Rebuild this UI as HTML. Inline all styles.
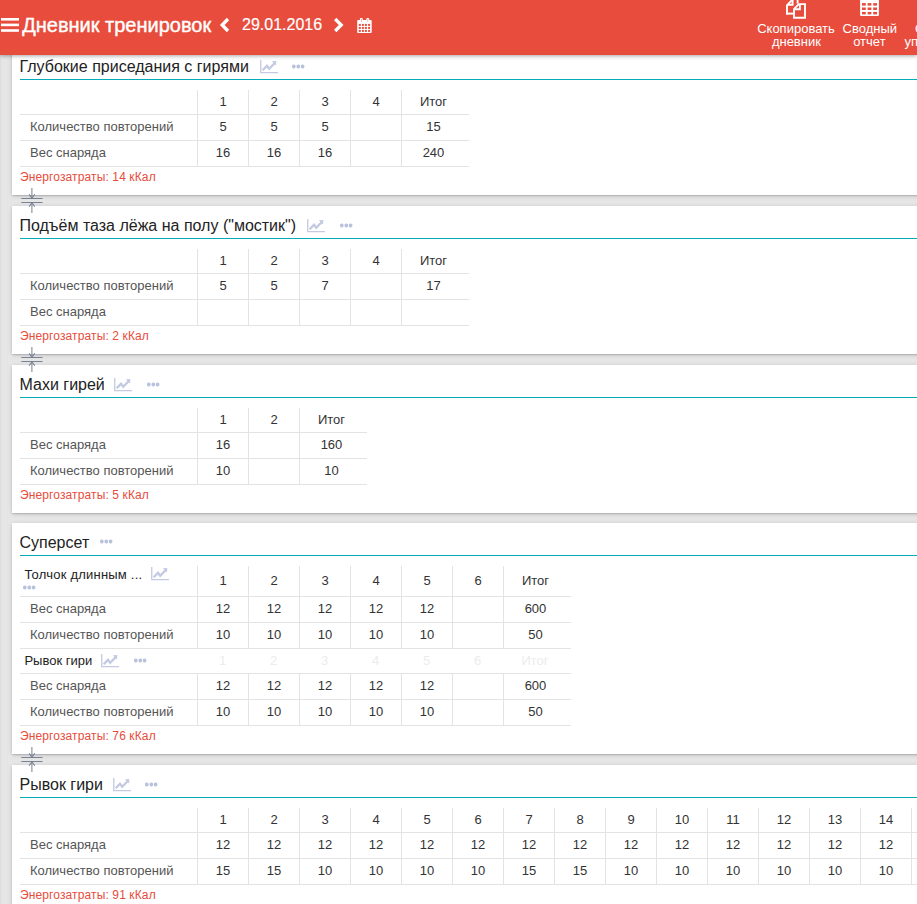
<!DOCTYPE html><html><head><meta charset="utf-8"><style>
*{margin:0;padding:0;box-sizing:border-box}
html,body{width:917px;height:904px;overflow:hidden}
body{background:linear-gradient(to right,#dcdcdc 0,#e2e2e2 1px,#e6e6e6 2.5px) #e6e6e6;font-family:"Liberation Sans", sans-serif;position:relative}
.t{position:absolute;white-space:nowrap}
.i{position:absolute;display:block}
.hdr{position:absolute;left:0;top:0;width:917px;height:55px;background:#e74c3c;z-index:10;box-shadow:0 1px 4px rgba(0,0,0,.35)}
.card{position:absolute;left:12px;width:940px;background:#fff;box-shadow:0 1px 5px -1px rgba(0,0,0,.27),0 1px 1px rgba(0,0,0,.1)}
.tl{position:absolute;left:8px;height:1px;width:940px;background:#02acb9}
.row{position:absolute;box-sizing:content-box}
.c0{position:absolute;left:0;top:0}
.cn{position:absolute;top:0;text-align:center;font-size:13px}
.lbl{position:absolute;left:10px;font-size:13px;color:#555;white-space:nowrap}
</style></head><body><div class="hdr"><svg class="i" style="left:0;top:0" width="917" height="54" viewBox="0 0 917 54"><rect x="1" y="18" width="18" height="2.6" fill="#ffffff"/><rect x="1" y="23.6" width="18" height="2.6" fill="#ffffff"/><rect x="1" y="29.2" width="18" height="2.6" fill="#ffffff"/><path d="M228 19 L222.2 25 L228 31" fill="none" stroke="#ffffff" stroke-width="3.3"/><path d="M335.2 19 L341.2 25 L335.2 31" fill="none" stroke="#ffffff" stroke-width="3.3"/><rect x="357.2" y="20" width="14.5" height="13" rx="1" fill="#ffffff"/><rect x="359.9" y="18" width="2.9" height="4" rx="1" fill="#ffffff"/><rect x="366.3" y="18" width="2.9" height="4" rx="1" fill="#ffffff"/><rect x="361" y="19" width="0.8" height="2.8" fill="#f2a69e"/><rect x="367.4" y="19" width="0.8" height="2.8" fill="#f2a69e"/><rect x="358.8" y="23.9" width="2" height="2" fill="#e74c3c"/><rect x="358.8" y="26.9" width="2" height="2" fill="#e74c3c"/><rect x="358.8" y="29.9" width="2" height="2" fill="#e74c3c"/><rect x="361.9" y="23.9" width="2" height="2" fill="#e74c3c"/><rect x="361.9" y="26.9" width="2" height="2" fill="#e74c3c"/><rect x="361.9" y="29.9" width="2" height="2" fill="#e74c3c"/><rect x="364.9" y="23.9" width="2" height="2" fill="#e74c3c"/><rect x="364.9" y="26.9" width="2" height="2" fill="#e74c3c"/><rect x="364.9" y="29.9" width="2" height="2" fill="#e74c3c"/><rect x="368.1" y="23.9" width="2" height="2" fill="#e74c3c"/><rect x="368.1" y="26.9" width="2" height="2" fill="#e74c3c"/><rect x="368.1" y="29.9" width="2" height="2" fill="#e74c3c"/><path d="M787 14.6 V5.3 L791.8 0.2 V-2" fill="none" stroke="#ffffff" stroke-width="1.9"/><path d="M786.1 13.6 H793.5" stroke="#ffffff" stroke-width="1.95"/><path d="M797.6 -2 V3.6" stroke="#ffffff" stroke-width="1.9"/><path d="M788 4.7 H792.6 V-1" fill="none" stroke="#ffffff" stroke-width="1.9"/><path d="M794 17.8 V9.2 L798.7 4.1 H805 V17.8 Z" fill="none" stroke="#ffffff" stroke-width="1.9"/><path d="M795 9.2 H799.9 V4.1" fill="none" stroke="#ffffff" stroke-width="1.9"/><rect x="860.1" y="-2" width="18.8" height="17.9" rx="0.8" fill="#ffffff"/><rect x="862" y="3.1" width="3.8" height="2.5" fill="#e74c3c"/><rect x="862" y="7.5" width="3.8" height="2.5" fill="#e74c3c"/><rect x="862" y="11.9" width="3.8" height="2.5" fill="#e74c3c"/><rect x="867.6" y="3.1" width="3.8" height="2.5" fill="#e74c3c"/><rect x="867.6" y="7.5" width="3.8" height="2.5" fill="#e74c3c"/><rect x="867.6" y="11.9" width="3.8" height="2.5" fill="#e74c3c"/><rect x="873.2" y="3.1" width="3.8" height="2.5" fill="#e74c3c"/><rect x="873.2" y="7.5" width="3.8" height="2.5" fill="#e74c3c"/><rect x="873.2" y="11.9" width="3.8" height="2.5" fill="#e74c3c"/></svg><div class="t" style="left:22.20px;top:13.27px;font-size:20px;line-height:25px;color:#ffffff;-webkit-text-stroke:0.4px #fff">Дневник тренировок</div><div class="t" style="left:242.00px;top:15.46px;font-size:16px;line-height:20px;color:#ffffff;-webkit-text-stroke:0.2px #fff">29.01.2016</div><div class="t" style="left:746.00px;top:20.90px;width:100px;text-align:center;font-size:13px;line-height:16px;color:#ffffff;">Скопировать</div><div class="t" style="left:746.40px;top:34.00px;width:100px;text-align:center;font-size:13px;line-height:16px;color:#ffffff;">дневник</div><div class="t" style="left:819.80px;top:20.90px;width:100px;text-align:center;font-size:13px;line-height:16px;color:#ffffff;">Сводный</div><div class="t" style="left:819.40px;top:34.00px;width:100px;text-align:center;font-size:13px;line-height:16px;color:#ffffff;">отчет</div><div class="t" style="left:915.00px;top:20.90px;font-size:13px;line-height:16px;color:#ffffff;">Справочник</div><div class="t" style="left:904.50px;top:34.00px;font-size:13px;line-height:16px;color:#ffffff;">упражнений</div></div><div class="card" style="top:47px;height:148px"></div><div class="t" style="left:19.50px;top:56.96px;font-size:16px;line-height:20px;color:#222;">Глубокие приседания с гирями</div><svg class="i" style="left:260px;top:60px" width="19" height="14" viewBox="0 0 19 14"><path d="M0.75 0 V12.7 H18" fill="none" stroke="#c3cae1" stroke-width="1.3"/><path d="M2.7 10.3 L7.0 5.7 L9.2 8.7 L14.6 3.2" fill="none" stroke="#c3cae1" stroke-width="2.3"/><path d="M11.9 1.3 L16.3 0.9 L16.0 5.4 Z" fill="#c3cae1"/></svg><svg class="i" style="left:292px;top:63.5px" width="13" height="5" viewBox="0 0 13 5"><rect x="0" y="0.5" width="3.6" height="3.9" rx="1.6" fill="#b9c2dc"/><rect x="4.5" y="0.5" width="3.6" height="3.9" rx="1.6" fill="#b9c2dc"/><rect x="8.8" y="0.5" width="3.6" height="3.9" rx="1.6" fill="#b9c2dc"/></svg><div class="tl" style="top:79px;left:20px"></div><div class="row" style="left:20px;top:90px;width:449px;height:24px;border-bottom:1px solid #e3e3e3"><div class="c0" style="width:177px;height:24px"></div><div class="cn" style="left:177px;width:51px;height:24px;border-left:1px solid #e3e3e3;line-height:23px;color:#333">1</div><div class="cn" style="left:228px;width:51px;height:24px;border-left:1px solid #e3e3e3;line-height:23px;color:#333">2</div><div class="cn" style="left:279px;width:51px;height:24px;border-left:1px solid #e3e3e3;line-height:23px;color:#333">3</div><div class="cn" style="left:330px;width:51px;height:24px;border-left:1px solid #e3e3e3;line-height:23px;color:#333">4</div><div class="cn" style="left:381px;width:68px;height:24px;border-left:1px solid #e3e3e3;padding-right:4px;line-height:23px;color:#333">Итог</div></div><div class="row" style="left:20px;top:115px;width:449px;height:25px;border-bottom:1px solid #e3e3e3"><div class="c0" style="width:177px;height:25px"><div class="lbl" style="top:0;line-height:23px">Количество повторений</div></div><div class="cn" style="left:177px;width:51px;height:25px;border-left:1px solid #e3e3e3;line-height:23px;color:#333">5</div><div class="cn" style="left:228px;width:51px;height:25px;border-left:1px solid #e3e3e3;line-height:23px;color:#333">5</div><div class="cn" style="left:279px;width:51px;height:25px;border-left:1px solid #e3e3e3;line-height:23px;color:#333">5</div><div class="cn" style="left:330px;width:51px;height:25px;border-left:1px solid #e3e3e3;line-height:23px;color:#333"></div><div class="cn" style="left:381px;width:68px;height:25px;border-left:1px solid #e3e3e3;padding-right:4px;line-height:23px;color:#333">15</div></div><div class="row" style="left:20px;top:141px;width:449px;height:25px;border-bottom:1px solid #e3e3e3"><div class="c0" style="width:177px;height:25px"><div class="lbl" style="top:0;line-height:23px">Вес снаряда</div></div><div class="cn" style="left:177px;width:51px;height:25px;border-left:1px solid #e3e3e3;line-height:23px;color:#333">16</div><div class="cn" style="left:228px;width:51px;height:25px;border-left:1px solid #e3e3e3;line-height:23px;color:#333">16</div><div class="cn" style="left:279px;width:51px;height:25px;border-left:1px solid #e3e3e3;line-height:23px;color:#333">16</div><div class="cn" style="left:330px;width:51px;height:25px;border-left:1px solid #e3e3e3;line-height:23px;color:#333"></div><div class="cn" style="left:381px;width:68px;height:25px;border-left:1px solid #e3e3e3;padding-right:4px;line-height:23px;color:#333">240</div></div><div class="t" style="left:20.00px;top:170.34px;font-size:12px;line-height:15px;color:#e74c3c;letter-spacing:0.12px">Энергозатраты: 14 кКал</div><div class="card" style="top:206px;height:148px"></div><div class="t" style="left:19.50px;top:215.96px;font-size:16px;line-height:20px;color:#222;">Подъём таза лёжа на полу ("мостик")</div><svg class="i" style="left:307px;top:219px" width="19" height="14" viewBox="0 0 19 14"><path d="M0.75 0 V12.7 H18" fill="none" stroke="#c3cae1" stroke-width="1.3"/><path d="M2.7 10.3 L7.0 5.7 L9.2 8.7 L14.6 3.2" fill="none" stroke="#c3cae1" stroke-width="2.3"/><path d="M11.9 1.3 L16.3 0.9 L16.0 5.4 Z" fill="#c3cae1"/></svg><svg class="i" style="left:339.7px;top:222.5px" width="13" height="5" viewBox="0 0 13 5"><rect x="0" y="0.5" width="3.6" height="3.9" rx="1.6" fill="#b9c2dc"/><rect x="4.5" y="0.5" width="3.6" height="3.9" rx="1.6" fill="#b9c2dc"/><rect x="8.8" y="0.5" width="3.6" height="3.9" rx="1.6" fill="#b9c2dc"/></svg><div class="tl" style="top:238px;left:20px"></div><div class="row" style="left:20px;top:249px;width:449px;height:24px;border-bottom:1px solid #e3e3e3"><div class="c0" style="width:177px;height:24px"></div><div class="cn" style="left:177px;width:51px;height:24px;border-left:1px solid #e3e3e3;line-height:23px;color:#333">1</div><div class="cn" style="left:228px;width:51px;height:24px;border-left:1px solid #e3e3e3;line-height:23px;color:#333">2</div><div class="cn" style="left:279px;width:51px;height:24px;border-left:1px solid #e3e3e3;line-height:23px;color:#333">3</div><div class="cn" style="left:330px;width:51px;height:24px;border-left:1px solid #e3e3e3;line-height:23px;color:#333">4</div><div class="cn" style="left:381px;width:68px;height:24px;border-left:1px solid #e3e3e3;padding-right:4px;line-height:23px;color:#333">Итог</div></div><div class="row" style="left:20px;top:274px;width:449px;height:25px;border-bottom:1px solid #e3e3e3"><div class="c0" style="width:177px;height:25px"><div class="lbl" style="top:0;line-height:23px">Количество повторений</div></div><div class="cn" style="left:177px;width:51px;height:25px;border-left:1px solid #e3e3e3;line-height:23px;color:#333">5</div><div class="cn" style="left:228px;width:51px;height:25px;border-left:1px solid #e3e3e3;line-height:23px;color:#333">5</div><div class="cn" style="left:279px;width:51px;height:25px;border-left:1px solid #e3e3e3;line-height:23px;color:#333">7</div><div class="cn" style="left:330px;width:51px;height:25px;border-left:1px solid #e3e3e3;line-height:23px;color:#333"></div><div class="cn" style="left:381px;width:68px;height:25px;border-left:1px solid #e3e3e3;padding-right:4px;line-height:23px;color:#333">17</div></div><div class="row" style="left:20px;top:300px;width:449px;height:25px;border-bottom:1px solid #e3e3e3"><div class="c0" style="width:177px;height:25px"><div class="lbl" style="top:0;line-height:23px">Вес снаряда</div></div><div class="cn" style="left:177px;width:51px;height:25px;border-left:1px solid #e3e3e3;line-height:23px;color:#333"></div><div class="cn" style="left:228px;width:51px;height:25px;border-left:1px solid #e3e3e3;line-height:23px;color:#333"></div><div class="cn" style="left:279px;width:51px;height:25px;border-left:1px solid #e3e3e3;line-height:23px;color:#333"></div><div class="cn" style="left:330px;width:51px;height:25px;border-left:1px solid #e3e3e3;line-height:23px;color:#333"></div><div class="cn" style="left:381px;width:68px;height:25px;border-left:1px solid #e3e3e3;padding-right:4px;line-height:23px;color:#333"></div></div><div class="t" style="left:20.00px;top:329.34px;font-size:12px;line-height:15px;color:#e74c3c;letter-spacing:0.12px">Энергозатраты: 2 кКал</div><div class="card" style="top:365px;height:148px"></div><div class="t" style="left:19.50px;top:374.96px;font-size:16px;line-height:20px;color:#222;">Махи гирей</div><svg class="i" style="left:114px;top:378px" width="19" height="14" viewBox="0 0 19 14"><path d="M0.75 0 V12.7 H18" fill="none" stroke="#c3cae1" stroke-width="1.3"/><path d="M2.7 10.3 L7.0 5.7 L9.2 8.7 L14.6 3.2" fill="none" stroke="#c3cae1" stroke-width="2.3"/><path d="M11.9 1.3 L16.3 0.9 L16.0 5.4 Z" fill="#c3cae1"/></svg><svg class="i" style="left:146.7px;top:381.5px" width="13" height="5" viewBox="0 0 13 5"><rect x="0" y="0.5" width="3.6" height="3.9" rx="1.6" fill="#b9c2dc"/><rect x="4.5" y="0.5" width="3.6" height="3.9" rx="1.6" fill="#b9c2dc"/><rect x="8.8" y="0.5" width="3.6" height="3.9" rx="1.6" fill="#b9c2dc"/></svg><div class="tl" style="top:397px;left:20px"></div><div class="row" style="left:20px;top:408px;width:347px;height:24px;border-bottom:1px solid #e3e3e3"><div class="c0" style="width:177px;height:24px"></div><div class="cn" style="left:177px;width:51px;height:24px;border-left:1px solid #e3e3e3;line-height:23px;color:#333">1</div><div class="cn" style="left:228px;width:51px;height:24px;border-left:1px solid #e3e3e3;line-height:23px;color:#333">2</div><div class="cn" style="left:279px;width:68px;height:24px;border-left:1px solid #e3e3e3;padding-right:4px;line-height:23px;color:#333">Итог</div></div><div class="row" style="left:20px;top:433px;width:347px;height:25px;border-bottom:1px solid #e3e3e3"><div class="c0" style="width:177px;height:25px"><div class="lbl" style="top:0;line-height:23px">Вес снаряда</div></div><div class="cn" style="left:177px;width:51px;height:25px;border-left:1px solid #e3e3e3;line-height:23px;color:#333">16</div><div class="cn" style="left:228px;width:51px;height:25px;border-left:1px solid #e3e3e3;line-height:23px;color:#333"></div><div class="cn" style="left:279px;width:68px;height:25px;border-left:1px solid #e3e3e3;padding-right:4px;line-height:23px;color:#333">160</div></div><div class="row" style="left:20px;top:459px;width:347px;height:25px;border-bottom:1px solid #e3e3e3"><div class="c0" style="width:177px;height:25px"><div class="lbl" style="top:0;line-height:23px">Количество повторений</div></div><div class="cn" style="left:177px;width:51px;height:25px;border-left:1px solid #e3e3e3;line-height:23px;color:#333">10</div><div class="cn" style="left:228px;width:51px;height:25px;border-left:1px solid #e3e3e3;line-height:23px;color:#333"></div><div class="cn" style="left:279px;width:68px;height:25px;border-left:1px solid #e3e3e3;padding-right:4px;line-height:23px;color:#333">10</div></div><div class="t" style="left:20.00px;top:488.34px;font-size:12px;line-height:15px;color:#e74c3c;letter-spacing:0.12px">Энергозатраты: 5 кКал</div><div class="card" style="top:523px;height:231px"></div><div class="t" style="left:19.50px;top:533.06px;font-size:16px;line-height:20px;color:#222;">Суперсет</div><svg class="i" style="left:99.7px;top:539.3px" width="13" height="5" viewBox="0 0 13 5"><rect x="0" y="0.5" width="3.6" height="3.9" rx="1.6" fill="#b9c2dc"/><rect x="4.5" y="0.5" width="3.6" height="3.9" rx="1.6" fill="#b9c2dc"/><rect x="8.8" y="0.5" width="3.6" height="3.9" rx="1.6" fill="#b9c2dc"/></svg><div class="tl" style="top:555px;left:20px"></div><div class="row" style="left:20px;top:566px;width:551px;height:30px;border-bottom:1px solid #e3e3e3"><div class="c0" style="width:177px;height:30px"></div><div class="cn" style="left:177px;width:51px;height:30px;border-left:1px solid #e3e3e3;line-height:30px;color:#333">1</div><div class="cn" style="left:228px;width:51px;height:30px;border-left:1px solid #e3e3e3;line-height:30px;color:#333">2</div><div class="cn" style="left:279px;width:51px;height:30px;border-left:1px solid #e3e3e3;line-height:30px;color:#333">3</div><div class="cn" style="left:330px;width:51px;height:30px;border-left:1px solid #e3e3e3;line-height:30px;color:#333">4</div><div class="cn" style="left:381px;width:51px;height:30px;border-left:1px solid #e3e3e3;line-height:30px;color:#333">5</div><div class="cn" style="left:432px;width:51px;height:30px;border-left:1px solid #e3e3e3;line-height:30px;color:#333">6</div><div class="cn" style="left:483px;width:68px;height:30px;border-left:1px solid #e3e3e3;padding-right:4px;line-height:30px;color:#333">Итог</div></div><div class="row" style="left:20px;top:597px;width:551px;height:25px;border-bottom:1px solid #e3e3e3"><div class="c0" style="width:177px;height:25px"><div class="lbl" style="top:0;line-height:23px">Вес снаряда</div></div><div class="cn" style="left:177px;width:51px;height:25px;border-left:1px solid #e3e3e3;line-height:23px;color:#333">12</div><div class="cn" style="left:228px;width:51px;height:25px;border-left:1px solid #e3e3e3;line-height:23px;color:#333">12</div><div class="cn" style="left:279px;width:51px;height:25px;border-left:1px solid #e3e3e3;line-height:23px;color:#333">12</div><div class="cn" style="left:330px;width:51px;height:25px;border-left:1px solid #e3e3e3;line-height:23px;color:#333">12</div><div class="cn" style="left:381px;width:51px;height:25px;border-left:1px solid #e3e3e3;line-height:23px;color:#333">12</div><div class="cn" style="left:432px;width:51px;height:25px;border-left:1px solid #e3e3e3;line-height:23px;color:#333"></div><div class="cn" style="left:483px;width:68px;height:25px;border-left:1px solid #e3e3e3;padding-right:4px;line-height:23px;color:#333">600</div></div><div class="row" style="left:20px;top:623px;width:551px;height:25px;border-bottom:1px solid #e3e3e3"><div class="c0" style="width:177px;height:25px"><div class="lbl" style="top:0;line-height:23px">Количество повторений</div></div><div class="cn" style="left:177px;width:51px;height:25px;border-left:1px solid #e3e3e3;line-height:23px;color:#333">10</div><div class="cn" style="left:228px;width:51px;height:25px;border-left:1px solid #e3e3e3;line-height:23px;color:#333">10</div><div class="cn" style="left:279px;width:51px;height:25px;border-left:1px solid #e3e3e3;line-height:23px;color:#333">10</div><div class="cn" style="left:330px;width:51px;height:25px;border-left:1px solid #e3e3e3;line-height:23px;color:#333">10</div><div class="cn" style="left:381px;width:51px;height:25px;border-left:1px solid #e3e3e3;line-height:23px;color:#333">10</div><div class="cn" style="left:432px;width:51px;height:25px;border-left:1px solid #e3e3e3;line-height:23px;color:#333"></div><div class="cn" style="left:483px;width:68px;height:25px;border-left:1px solid #e3e3e3;padding-right:4px;line-height:23px;color:#333">50</div></div><div class="row" style="left:20px;top:649px;width:551px;height:24px;border-bottom:1px solid #e3e3e3"><div class="c0" style="width:177px;height:24px"></div><div class="cn" style="left:177px;width:51px;height:24px;line-height:23px;color:#ececec">1</div><div class="cn" style="left:228px;width:51px;height:24px;line-height:23px;color:#ececec">2</div><div class="cn" style="left:279px;width:51px;height:24px;line-height:23px;color:#ececec">3</div><div class="cn" style="left:330px;width:51px;height:24px;line-height:23px;color:#ececec">4</div><div class="cn" style="left:381px;width:51px;height:24px;line-height:23px;color:#ececec">5</div><div class="cn" style="left:432px;width:51px;height:24px;line-height:23px;color:#ececec">6</div><div class="cn" style="left:483px;width:68px;height:24px;padding-right:4px;line-height:23px;color:#ececec">Итог</div></div><div class="row" style="left:20px;top:674px;width:551px;height:25px;border-bottom:1px solid #e3e3e3"><div class="c0" style="width:177px;height:25px"><div class="lbl" style="top:0;line-height:23px">Вес снаряда</div></div><div class="cn" style="left:177px;width:51px;height:25px;border-left:1px solid #e3e3e3;line-height:23px;color:#333">12</div><div class="cn" style="left:228px;width:51px;height:25px;border-left:1px solid #e3e3e3;line-height:23px;color:#333">12</div><div class="cn" style="left:279px;width:51px;height:25px;border-left:1px solid #e3e3e3;line-height:23px;color:#333">12</div><div class="cn" style="left:330px;width:51px;height:25px;border-left:1px solid #e3e3e3;line-height:23px;color:#333">12</div><div class="cn" style="left:381px;width:51px;height:25px;border-left:1px solid #e3e3e3;line-height:23px;color:#333">12</div><div class="cn" style="left:432px;width:51px;height:25px;border-left:1px solid #e3e3e3;line-height:23px;color:#333"></div><div class="cn" style="left:483px;width:68px;height:25px;border-left:1px solid #e3e3e3;padding-right:4px;line-height:23px;color:#333">600</div></div><div class="row" style="left:20px;top:700px;width:551px;height:25px;border-bottom:1px solid #e3e3e3"><div class="c0" style="width:177px;height:25px"><div class="lbl" style="top:0;line-height:23px">Количество повторений</div></div><div class="cn" style="left:177px;width:51px;height:25px;border-left:1px solid #e3e3e3;line-height:23px;color:#333">10</div><div class="cn" style="left:228px;width:51px;height:25px;border-left:1px solid #e3e3e3;line-height:23px;color:#333">10</div><div class="cn" style="left:279px;width:51px;height:25px;border-left:1px solid #e3e3e3;line-height:23px;color:#333">10</div><div class="cn" style="left:330px;width:51px;height:25px;border-left:1px solid #e3e3e3;line-height:23px;color:#333">10</div><div class="cn" style="left:381px;width:51px;height:25px;border-left:1px solid #e3e3e3;line-height:23px;color:#333">10</div><div class="cn" style="left:432px;width:51px;height:25px;border-left:1px solid #e3e3e3;line-height:23px;color:#333"></div><div class="cn" style="left:483px;width:68px;height:25px;border-left:1px solid #e3e3e3;padding-right:4px;line-height:23px;color:#333">50</div></div><div class="t" style="left:24.40px;top:566.50px;font-size:13px;line-height:16px;color:#222;letter-spacing:0.22px">Толчок длинным ...</div><svg class="i" style="left:151px;top:567px" width="19" height="14" viewBox="0 0 19 14"><path d="M0.75 0 V12.7 H18" fill="none" stroke="#c3cae1" stroke-width="1.3"/><path d="M2.7 10.3 L7.0 5.7 L9.2 8.7 L14.6 3.2" fill="none" stroke="#c3cae1" stroke-width="2.3"/><path d="M11.9 1.3 L16.3 0.9 L16.0 5.4 Z" fill="#c3cae1"/></svg><svg class="i" style="left:23px;top:585.2px" width="13" height="5" viewBox="0 0 13 5"><rect x="0" y="0.5" width="3.6" height="3.9" rx="1.6" fill="#b9c2dc"/><rect x="4.5" y="0.5" width="3.6" height="3.9" rx="1.6" fill="#b9c2dc"/><rect x="8.8" y="0.5" width="3.6" height="3.9" rx="1.6" fill="#b9c2dc"/></svg><div class="t" style="left:24.40px;top:653.10px;font-size:13px;line-height:16px;color:#222;">Рывок гири</div><svg class="i" style="left:101px;top:654px" width="19" height="14" viewBox="0 0 19 14"><path d="M0.75 0 V12.7 H18" fill="none" stroke="#c3cae1" stroke-width="1.3"/><path d="M2.7 10.3 L7.0 5.7 L9.2 8.7 L14.6 3.2" fill="none" stroke="#c3cae1" stroke-width="2.3"/><path d="M11.9 1.3 L16.3 0.9 L16.0 5.4 Z" fill="#c3cae1"/></svg><svg class="i" style="left:133.6px;top:657.7px" width="13" height="5" viewBox="0 0 13 5"><rect x="0" y="0.5" width="3.6" height="3.9" rx="1.6" fill="#b9c2dc"/><rect x="4.5" y="0.5" width="3.6" height="3.9" rx="1.6" fill="#b9c2dc"/><rect x="8.8" y="0.5" width="3.6" height="3.9" rx="1.6" fill="#b9c2dc"/></svg><div class="t" style="left:20.00px;top:729.34px;font-size:12px;line-height:15px;color:#e74c3c;letter-spacing:0.12px">Энергозатраты: 76 кКал</div><div class="card" style="top:765px;height:200px"></div><div class="t" style="left:19.50px;top:774.76px;font-size:16px;line-height:20px;color:#222;">Рывок гири</div><svg class="i" style="left:113px;top:778px" width="19" height="14" viewBox="0 0 19 14"><path d="M0.75 0 V12.7 H18" fill="none" stroke="#c3cae1" stroke-width="1.3"/><path d="M2.7 10.3 L7.0 5.7 L9.2 8.7 L14.6 3.2" fill="none" stroke="#c3cae1" stroke-width="2.3"/><path d="M11.9 1.3 L16.3 0.9 L16.0 5.4 Z" fill="#c3cae1"/></svg><svg class="i" style="left:145px;top:781.5px" width="13" height="5" viewBox="0 0 13 5"><rect x="0" y="0.5" width="3.6" height="3.9" rx="1.6" fill="#b9c2dc"/><rect x="4.5" y="0.5" width="3.6" height="3.9" rx="1.6" fill="#b9c2dc"/><rect x="8.8" y="0.5" width="3.6" height="3.9" rx="1.6" fill="#b9c2dc"/></svg><div class="tl" style="top:797px;left:20px"></div><div class="row" style="left:20px;top:808px;width:993px;height:24px;border-bottom:1px solid #e3e3e3"><div class="c0" style="width:177px;height:24px"></div><div class="cn" style="left:177px;width:51px;height:24px;border-left:1px solid #e3e3e3;line-height:23px;color:#333">1</div><div class="cn" style="left:228px;width:51px;height:24px;border-left:1px solid #e3e3e3;line-height:23px;color:#333">2</div><div class="cn" style="left:279px;width:51px;height:24px;border-left:1px solid #e3e3e3;line-height:23px;color:#333">3</div><div class="cn" style="left:330px;width:51px;height:24px;border-left:1px solid #e3e3e3;line-height:23px;color:#333">4</div><div class="cn" style="left:381px;width:51px;height:24px;border-left:1px solid #e3e3e3;line-height:23px;color:#333">5</div><div class="cn" style="left:432px;width:51px;height:24px;border-left:1px solid #e3e3e3;line-height:23px;color:#333">6</div><div class="cn" style="left:483px;width:51px;height:24px;border-left:1px solid #e3e3e3;line-height:23px;color:#333">7</div><div class="cn" style="left:534px;width:51px;height:24px;border-left:1px solid #e3e3e3;line-height:23px;color:#333">8</div><div class="cn" style="left:585px;width:51px;height:24px;border-left:1px solid #e3e3e3;line-height:23px;color:#333">9</div><div class="cn" style="left:636px;width:51px;height:24px;border-left:1px solid #e3e3e3;line-height:23px;color:#333">10</div><div class="cn" style="left:687px;width:51px;height:24px;border-left:1px solid #e3e3e3;line-height:23px;color:#333">11</div><div class="cn" style="left:738px;width:51px;height:24px;border-left:1px solid #e3e3e3;line-height:23px;color:#333">12</div><div class="cn" style="left:789px;width:51px;height:24px;border-left:1px solid #e3e3e3;line-height:23px;color:#333">13</div><div class="cn" style="left:840px;width:51px;height:24px;border-left:1px solid #e3e3e3;line-height:23px;color:#333">14</div><div class="cn" style="left:891px;width:51px;height:24px;border-left:1px solid #e3e3e3;line-height:23px;color:#333">15</div><div class="cn" style="left:942px;width:51px;height:24px;border-left:1px solid #e3e3e3;line-height:23px;color:#333">16</div></div><div class="row" style="left:20px;top:833px;width:993px;height:25px;border-bottom:1px solid #e3e3e3"><div class="c0" style="width:177px;height:25px"><div class="lbl" style="top:0;line-height:23px">Вес снаряда</div></div><div class="cn" style="left:177px;width:51px;height:25px;border-left:1px solid #e3e3e3;line-height:23px;color:#333">12</div><div class="cn" style="left:228px;width:51px;height:25px;border-left:1px solid #e3e3e3;line-height:23px;color:#333">12</div><div class="cn" style="left:279px;width:51px;height:25px;border-left:1px solid #e3e3e3;line-height:23px;color:#333">12</div><div class="cn" style="left:330px;width:51px;height:25px;border-left:1px solid #e3e3e3;line-height:23px;color:#333">12</div><div class="cn" style="left:381px;width:51px;height:25px;border-left:1px solid #e3e3e3;line-height:23px;color:#333">12</div><div class="cn" style="left:432px;width:51px;height:25px;border-left:1px solid #e3e3e3;line-height:23px;color:#333">12</div><div class="cn" style="left:483px;width:51px;height:25px;border-left:1px solid #e3e3e3;line-height:23px;color:#333">12</div><div class="cn" style="left:534px;width:51px;height:25px;border-left:1px solid #e3e3e3;line-height:23px;color:#333">12</div><div class="cn" style="left:585px;width:51px;height:25px;border-left:1px solid #e3e3e3;line-height:23px;color:#333">12</div><div class="cn" style="left:636px;width:51px;height:25px;border-left:1px solid #e3e3e3;line-height:23px;color:#333">12</div><div class="cn" style="left:687px;width:51px;height:25px;border-left:1px solid #e3e3e3;line-height:23px;color:#333">12</div><div class="cn" style="left:738px;width:51px;height:25px;border-left:1px solid #e3e3e3;line-height:23px;color:#333">12</div><div class="cn" style="left:789px;width:51px;height:25px;border-left:1px solid #e3e3e3;line-height:23px;color:#333">12</div><div class="cn" style="left:840px;width:51px;height:25px;border-left:1px solid #e3e3e3;line-height:23px;color:#333">12</div><div class="cn" style="left:891px;width:51px;height:25px;border-left:1px solid #e3e3e3;line-height:23px;color:#333">12</div><div class="cn" style="left:942px;width:51px;height:25px;border-left:1px solid #e3e3e3;line-height:23px;color:#333">12</div></div><div class="row" style="left:20px;top:859px;width:993px;height:25px;border-bottom:1px solid #e3e3e3"><div class="c0" style="width:177px;height:25px"><div class="lbl" style="top:0;line-height:23px">Количество повторений</div></div><div class="cn" style="left:177px;width:51px;height:25px;border-left:1px solid #e3e3e3;line-height:23px;color:#333">15</div><div class="cn" style="left:228px;width:51px;height:25px;border-left:1px solid #e3e3e3;line-height:23px;color:#333">15</div><div class="cn" style="left:279px;width:51px;height:25px;border-left:1px solid #e3e3e3;line-height:23px;color:#333">10</div><div class="cn" style="left:330px;width:51px;height:25px;border-left:1px solid #e3e3e3;line-height:23px;color:#333">10</div><div class="cn" style="left:381px;width:51px;height:25px;border-left:1px solid #e3e3e3;line-height:23px;color:#333">10</div><div class="cn" style="left:432px;width:51px;height:25px;border-left:1px solid #e3e3e3;line-height:23px;color:#333">10</div><div class="cn" style="left:483px;width:51px;height:25px;border-left:1px solid #e3e3e3;line-height:23px;color:#333">15</div><div class="cn" style="left:534px;width:51px;height:25px;border-left:1px solid #e3e3e3;line-height:23px;color:#333">15</div><div class="cn" style="left:585px;width:51px;height:25px;border-left:1px solid #e3e3e3;line-height:23px;color:#333">10</div><div class="cn" style="left:636px;width:51px;height:25px;border-left:1px solid #e3e3e3;line-height:23px;color:#333">10</div><div class="cn" style="left:687px;width:51px;height:25px;border-left:1px solid #e3e3e3;line-height:23px;color:#333">10</div><div class="cn" style="left:738px;width:51px;height:25px;border-left:1px solid #e3e3e3;line-height:23px;color:#333">10</div><div class="cn" style="left:789px;width:51px;height:25px;border-left:1px solid #e3e3e3;line-height:23px;color:#333">10</div><div class="cn" style="left:840px;width:51px;height:25px;border-left:1px solid #e3e3e3;line-height:23px;color:#333">10</div><div class="cn" style="left:891px;width:51px;height:25px;border-left:1px solid #e3e3e3;line-height:23px;color:#333">10</div><div class="cn" style="left:942px;width:51px;height:25px;border-left:1px solid #e3e3e3;line-height:23px;color:#333">10</div></div><div class="t" style="left:20.00px;top:887.84px;font-size:12px;line-height:15px;color:#e74c3c;letter-spacing:0.12px">Энергозатраты: 91 кКал</div><svg class="i" style="left:21px;top:188.0px;z-index:5" width="22" height="25" viewBox="0 0 22 25"><path d="M0.3 10.5 H21.5 M0.3 14.5 H21.5" stroke="#7a8193" stroke-width="1"/><path d="M10.9 0 V10 M10.9 15 V25" stroke="#7a8193" stroke-width="1"/><path d="M8.1 6.3 L10.9 10.3 L13.7 6.3 M8.1 18.7 L10.9 14.7 L13.7 18.7" fill="none" stroke="#7a8193" stroke-width="1.1"/></svg><svg class="i" style="left:21px;top:347.0px;z-index:5" width="22" height="25" viewBox="0 0 22 25"><path d="M0.3 10.5 H21.5 M0.3 14.5 H21.5" stroke="#7a8193" stroke-width="1"/><path d="M10.9 0 V10 M10.9 15 V25" stroke="#7a8193" stroke-width="1"/><path d="M8.1 6.3 L10.9 10.3 L13.7 6.3 M8.1 18.7 L10.9 14.7 L13.7 18.7" fill="none" stroke="#7a8193" stroke-width="1.1"/></svg><svg class="i" style="left:21px;top:747.0px;z-index:5" width="22" height="25" viewBox="0 0 22 25"><path d="M0.3 10.5 H21.5 M0.3 14.5 H21.5" stroke="#7a8193" stroke-width="1"/><path d="M10.9 0 V10 M10.9 15 V25" stroke="#7a8193" stroke-width="1"/><path d="M8.1 6.3 L10.9 10.3 L13.7 6.3 M8.1 18.7 L10.9 14.7 L13.7 18.7" fill="none" stroke="#7a8193" stroke-width="1.1"/></svg></body></html>
